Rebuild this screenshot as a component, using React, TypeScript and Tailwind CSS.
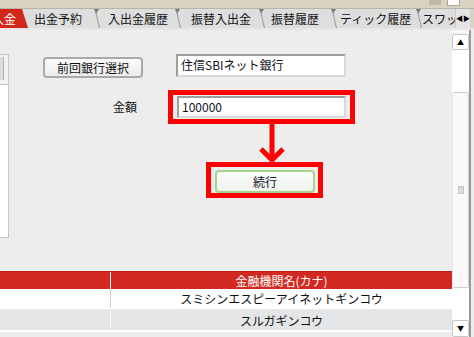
import React from "react";

const Sep = () => (
  <svg width="6" height="19" viewBox="0 0 6 19" className="shrink-0">
    <polygon points="0,0 5,0 2,5" fill="#7a7a7a" />
    <line x1="1.5" y1="2" x2="5.5" y2="19" stroke="#9a9a9a" strokeWidth="1" />
  </svg>
);

export default function App() {
  return (
    <div
      className="w-[474px] h-[337px] overflow-hidden bg-[#ededed] flex flex-col text-[12px] text-[#111]"
      style={{ fontFamily: '"Noto Sans CJK JP", "Noto Sans", sans-serif' }}
    >
      {/* window chrome */}
      <div className="h-[9px] bg-[#d8d3c3] border-b border-[#b9b4a6] flex justify-end items-start pr-[14px] gap-[6px] shrink-0">
        <div className="w-[12px] h-[5px] bg-[#bfb9a8] mt-0" />
        <div className="w-[13px] h-[6px] bg-white border border-[#a9a498] border-t-0" />
      </div>
      {/* tabs */}
      <div className="h-[19px] bg-[#dedede] flex items-stretch shrink-0 leading-[19px] whitespace-nowrap relative">
        <div className="flex items-stretch">
          <div className="bg-[#d2281c] text-white overflow-hidden w-[22px]">
            <span className="ml-[-8px]">入金</span>
          </div>
          <svg width="6" height="19" viewBox="0 0 6 19" className="shrink-0">
            <polygon points="0,0 0,19 6,19" fill="#d2281c" />
          </svg>
        </div>
        <div className="pl-[6px] w-[66px]">出金予約</div>
        <Sep />
        <div className="pl-[8px] w-[75px]">入出金履歴</div>
        <Sep />
        <div className="pl-[10px] w-[78px]">振替入出金</div>
        <Sep />
        <div className="pl-[6px] w-[66px]">振替履歴</div>
        <Sep />
        <div className="pl-[3px] w-[79px]">ティック履歴</div>
        <Sep />
        <div className="w-[33px] overflow-hidden">スワップ</div>
        <div className="w-[15px] bg-[#e4e4e4] border-l border-[#c8c8c8] flex items-center justify-center text-[7px] text-black leading-none">
          ◀▶
        </div>
        <div className="flex-1 bg-[#d8d3c3]" />
      </div>
      <div className="h-[2px] bg-[#e7e7e7] shrink-0" />
      {/* main */}
      <div className="flex-1 flex min-h-0">
        <div className="flex-1 flex flex-col min-w-0">
          <div className="h-[241px] flex shrink-0">
            {/* left panel */}
            <div className="w-[9px] mt-[24px] h-[184px] bg-white border border-l-0 border-[#c6c6c6] flex flex-col shrink-0">
              <div className="h-[30px] border-b border-[#c6c6c6] bg-[#f2f2f2] pt-[2px]">
                <div className="h-[23px] w-[4px] bg-[#dcdcdc] border-r border-[#b0b0b0]" />
              </div>
            </div>
            {/* form */}
            <div className="flex-1 flex flex-col">
              <div className="flex items-start mt-[24px]">
                <button className="ml-[34px] mt-[3px] w-[100px] h-[21px] rounded-[4px] border-2 border-[#a7aaa8] bg-gradient-to-b from-[#fbfbfb] to-[#ececec] text-[12px] leading-[17px] text-[#111]">
                  前回銀行選択
                </button>
                <div className="ml-[33px] w-[170px] h-[23px] bg-white border-2 border-t-[#9a9e9c] border-l-[#9a9e9c] border-r-[#d8dad8] border-b-[#d8dad8] pl-[3px] leading-[18px] text-[#112]">
                  住信SBIネット銀行
                </div>
              </div>
              <div className="flex items-center mt-[12px]">
                <div className="ml-[104px] w-[36px] leading-[14px]">金額</div>
                <div className="ml-[19px] border-[5px] border-[#ff0000] px-[4px] py-[1px] w-[187px]">
                  <div className="h-[22px] bg-white border-2 border-t-[#9a9e9c] border-l-[#9a9e9c] border-r-[#d8dad8] border-b-[#d8dad8] pl-[3px] leading-[17px] text-[#112]">
                    100000
                  </div>
                </div>
              </div>
              <svg width="30" height="38" viewBox="0 0 30 38" className="ml-[248px] shrink-0">
                <line x1="15" y1="0" x2="15" y2="36" stroke="#ff0000" strokeWidth="5" />
                <polyline points="4,25 15,36 26,25" fill="none" stroke="#ff0000" strokeWidth="5" />
              </svg>
              <div className="ml-[197px] w-[117px] h-[36px] border-[5px] border-[#ff0000] pt-[3px] pl-[4px]">
                <button className="w-[100px] h-[23px] rounded-[4px] border-2 border-[#a6d38e] bg-gradient-to-b from-[#fbfbfb] to-[#eef3ec] text-[12px] leading-[17px] text-[#112]">
                  続行
                </button>
              </div>
            </div>
          </div>
          {/* table */}
          <div className="flex flex-col">
            <div className="h-[18px] bg-[#d22a22] border-t border-[#b92018] flex text-white leading-[17px]">
              <div className="w-[111px] border-r border-white" />
              <div className="flex-1 text-center">金融機関名(カナ)</div>
            </div>
            <div className="h-[21px] bg-white flex leading-[20px] border-b border-[#e9e9e9]">
              <div className="w-[111px] border-r border-[#cfcfcf] my-[1px]" />
              <div className="flex-1 text-center">スミシンエスピーアイネットギンコウ</div>
            </div>
            <div className="h-[22px] bg-[#e4e5e7] flex leading-[21px] border-b-2 border-white">
              <div className="w-[111px] border-r border-white my-[1px]" />
              <div className="flex-1 text-center">スルガギンコウ</div>
            </div>
          </div>
        </div>
        {/* scrollbar */}
        <div className="w-[22px] flex shrink-0">
          <div className="w-[17px] flex flex-col pt-[4px] bg-[#f7f7f7]">
            <div className="h-[16px] bg-white border border-[#c8c8c8] rounded-[2px] flex items-center justify-center text-[7px] leading-none text-black">
              ▲
            </div>
            <div className="flex-1 flex flex-col pt-[42px] pb-[32px] bg-white">
              <div className="flex-1 bg-[#fafafa] border border-[#cfcfcf] border-l-[#e6e6e6] rounded-[2px] flex items-center justify-center">
                <div className="w-[6px] h-[8px] bg-[#dcdcdc] border border-[#c8c8c8]" />
              </div>
            </div>
            <div className="h-[17px] bg-white border border-[#c8c8c8] rounded-[2px] flex items-center justify-center text-[7px] leading-none text-black">
              ▼
            </div>
          </div>
          <div className="w-[2px] bg-[#9a9a9a]" />
          <div className="w-[3px] bg-[#ededed]" />
        </div>
      </div>
    </div>
  );
}
